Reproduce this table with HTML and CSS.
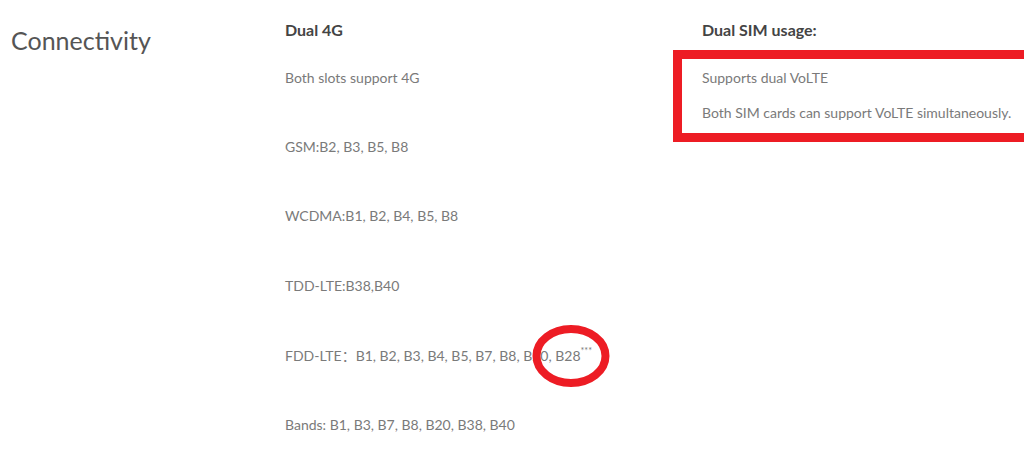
FILE: index.html
```html
<!DOCTYPE html>
<html lang="en">
<head>
<meta charset="utf-8">
<title>Connectivity</title>
<link rel="stylesheet" href="styles.css">
</head>
<body>
<div class="spec">
  <div class="label">Connectivity</div>
  <div class="col col-main">
    <h3 class="head">Dual 4G</h3>
    <p class="item">Both slots support 4G</p>
    <p class="item">GSM:B2, B3, B5, B8</p>
    <p class="item">WCDMA:B1, B2, B4, B5, B8</p>
    <p class="item">TDD-LTE:B38,B40</p>
    <p class="item">FDD-LTE<span class="fw">：</span>B1, B2, B3, B4, B5, B7, B8, B20, B28<sup class="mark">***</sup></p>
    <p class="item">Bands: B1, B3, B7, B8, B20, B38, B40</p>
  </div>
  <div class="col col-side">
    <h3 class="head">Dual SIM usage:</h3>
    <p class="item-tight">Supports dual VoLTE</p>
    <p class="item-tight">Both SIM cards can support VoLTE simultaneously.</p>
  </div>
  <div class="annot-rect"></div>
  <svg class="annot-ellipse" width="90" height="72" viewBox="0 0 90 72">
    <ellipse cx="45" cy="36" rx="34.5" ry="27" fill="none" stroke="#ed1c24" stroke-width="8"/>
  </svg>
</div>
</body>
</html>
```
FILE: styles.css
```css
html, body {
  margin: 0;
  padding: 0;
  background: #ffffff;
}
body {
  font-family: Lato, "Liberation Sans", sans-serif;
  width: 1024px;
  height: 456px;
  overflow: hidden;
}
.spec {
  position: relative;
  display: flex;
  padding-top: 20px;
  height: 436px;
  overflow: hidden;
}
.label {
  width: 274px;
  padding-left: 11px;
  padding-top: 5px;
  font-size: 25px;
  line-height: 30px;
  color: #555555;
}
.col-main {
  width: 417px;
}
.col-side {
  flex: 1;
}
.head {
  margin: 0 0 28px;
  font-size: 16px;
  line-height: 20px;
  font-weight: 700;
  color: #444444;
}
.item {
  margin: 0 0 49.2px;
  font-size: 14px;
  line-height: 20px;
  color: #7a7a7a;
}
.item:last-child {
  margin-bottom: 0;
}
.item-tight {
  margin: 0 0 15px;
  font-size: 14px;
  line-height: 20px;
  color: #7a7a7a;
}
.fw {
  font-family: "Noto Sans CJK SC", sans-serif;
}
.mark {
  font-size: 9px;
  vertical-align: top;
  line-height: 12px;
  color: #777777;
}
.annot-rect {
  position: absolute;
  left: 673px;
  top: 50px;
  width: 360px;
  height: 74px;
  border: 9px solid #ed1c24;
}
.annot-ellipse {
  position: absolute;
  left: 526px;
  top: 320px;
}
```
